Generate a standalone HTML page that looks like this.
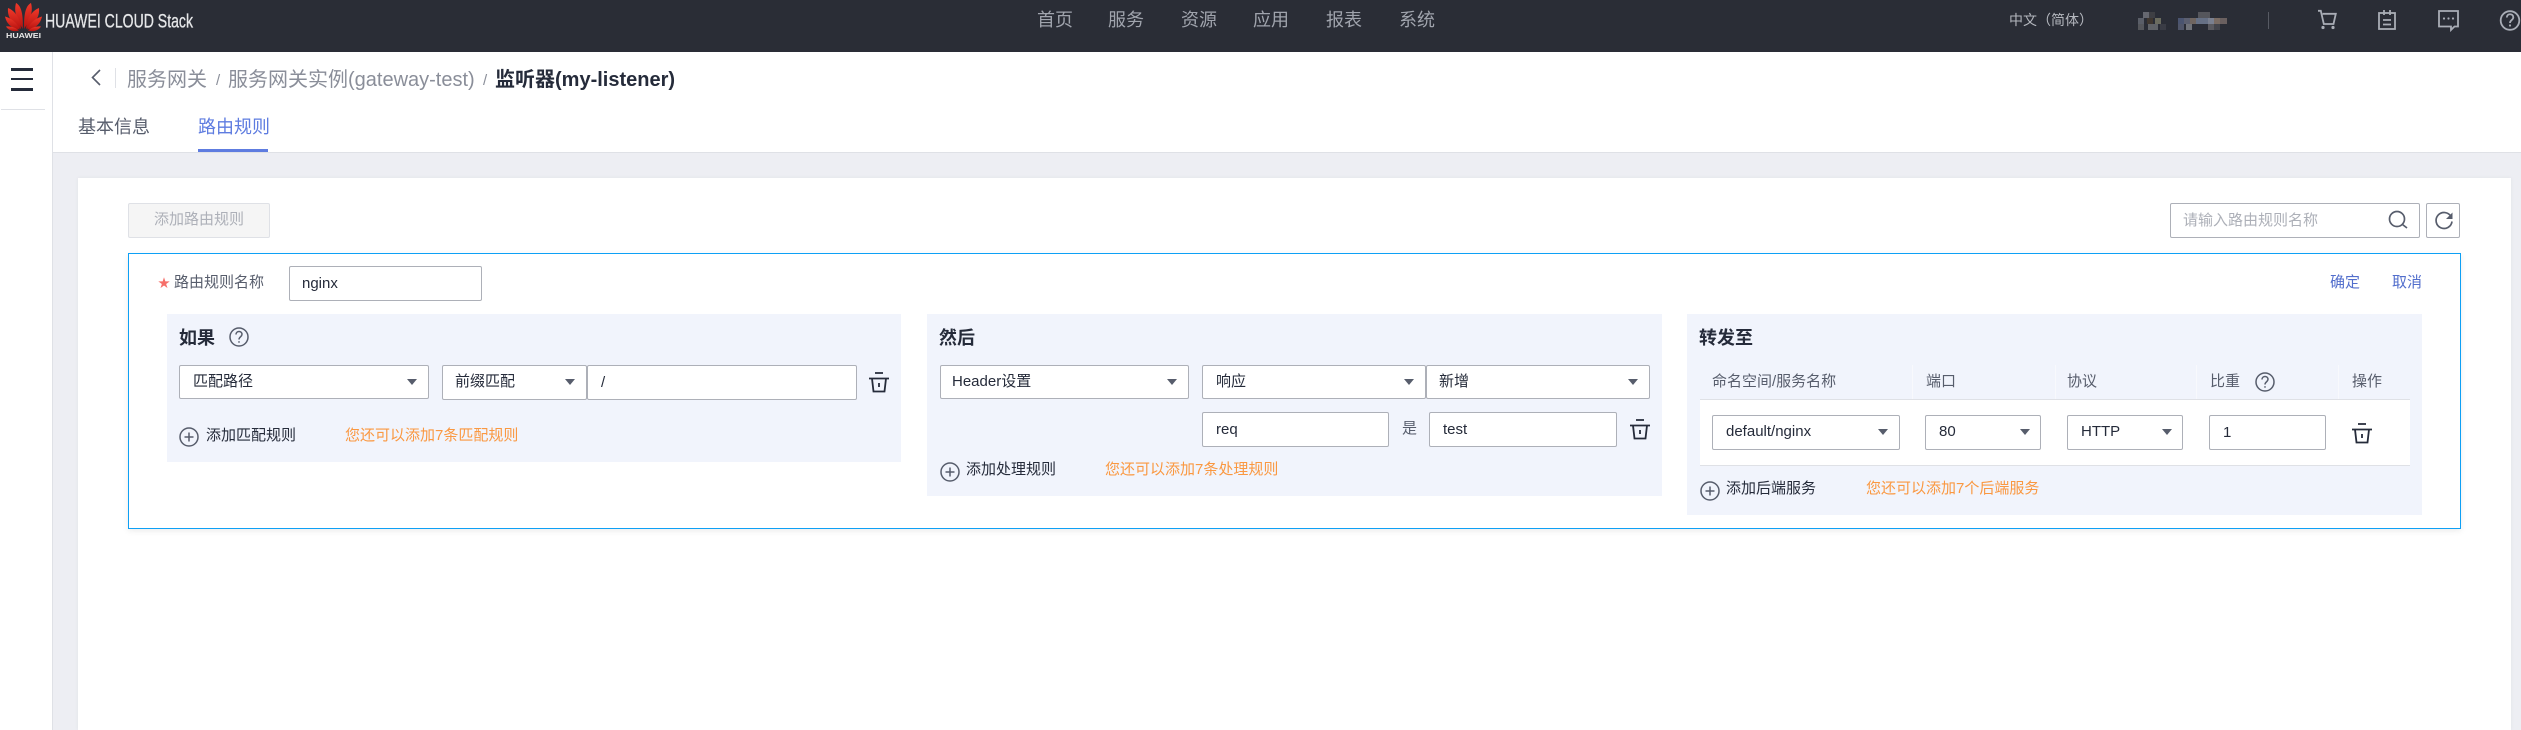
<!DOCTYPE html>
<html lang="zh-CN">
<head>
<meta charset="utf-8">
<title>监听器</title>
<style>
html,body{margin:0;padding:0;width:2521px;height:730px;overflow:hidden;background:#fff}
body{position:relative;font-family:"Liberation Sans","Noto Sans CJK SC",sans-serif;font-size:15px;color:#252b3a}
div,span,svg{position:absolute}
.t{white-space:nowrap;line-height:20px;height:20px}
.b{box-sizing:border-box;background:#fff;border:1px solid #adb0b8;border-radius:2px}
.a{width:0;height:0;border-left:5px solid transparent;border-right:5px solid transparent;border-top:6px solid #575d6c}
.o{color:#fa9841}
.l{color:#575d6c}
.h{font-size:18px;font-weight:700}
.n{color:#a0a4ad;font-size:18px;top:10px}
.p{background:#f1f4fc}
.d{background:#f8f9fd;width:1px;top:365px;height:34px}
</style>
</head>
<body>
<!-- top bar -->
<div style="left:0;top:0;width:2521px;height:52px;background:#2a2d36"></div>
<svg style="left:0;top:0" width="200" height="52" viewBox="0 0 200 52">
<defs><linearGradient id="r" x1="0" y1="0" x2="0" y2="1"><stop offset="0" stop-color="#f0392a"/><stop offset="1" stop-color="#b5120f"/></linearGradient></defs>
<g fill="url(#r)">
<path d="M22.800 29 C19 22 13 14 16 3 C20 5 23.500 11 22.800 29Z"/>
<path d="M24.200 29 C28 22 34 14 31 3 C27 5 23.500 11 24.200 29Z"/>
<path d="M21 29 C14 24 7 19 8 8 C14 10 20.500 18 21 29Z"/>
<path d="M26 29 C33 24 40 19 39 8 C33 10 26.500 18 26 29Z"/>
<path d="M20 29.500 C13 28.500 7 25.500 5 16.500 C11 18 17.500 23 20 29.500Z"/>
<path d="M27 29.500 C34 28.500 40 25.500 42 16.500 C36 18 29.500 23 27 29.500Z"/>
<path d="M19 30.500 C14 32 9 31 6 26.500 C11 26 15.500 27.500 19 30.500Z"/>
<path d="M28 30.500 C33 32 38 31 41 26.500 C36 26 31.500 27.500 28 30.500Z"/>
</g>
<text x="6" y="38" font-family="Liberation Sans" font-size="7" font-weight="700" fill="#e8e8e8" textLength="35" lengthAdjust="spacingAndGlyphs">HUAWEI</text>
<text x="45" y="27.500" font-family="Liberation Sans" font-size="19" fill="#e6e7e9" stroke="#e6e7e9" stroke-width=".3" textLength="148" lengthAdjust="spacingAndGlyphs">HUAWEI CLOUD Stack</text>
</svg>
<span class="t n" style="left:1037px">首页</span>
<span class="t n" style="left:1108px">服务</span>
<span class="t n" style="left:1181px">资源</span>
<span class="t n" style="left:1253px">应用</span>
<span class="t n" style="left:1326px">报表</span>
<span class="t n" style="left:1399px">系统</span>
<span class="t" style="left:2009px;top:10px;color:#b4b7be;font-size:14px">中文（简体）</span>
<svg style="left:2130px;top:0" width="391" height="52" viewBox="2130 0 391 52">
<g>
<rect x="2143" y="12" width="6" height="6" fill="#666870"/><rect x="2149" y="12" width="6" height="6" fill="#3e3f44"/><rect x="2198" y="12" width="12" height="6" fill="#55565c"/>
<rect x="2138" y="18" width="6" height="6" fill="#5a5e68"/><rect x="2147" y="18" width="6" height="6" fill="#3f3730"/><rect x="2155" y="18" width="6" height="6" fill="#6b6c5f"/><rect x="2178" y="18" width="6" height="6" fill="#4a5470"/><rect x="2184" y="18" width="6" height="6" fill="#5b5f70"/><rect x="2190" y="18" width="6" height="6" fill="#6f6560"/><rect x="2196" y="18" width="12" height="6" fill="#667085"/><rect x="2208" y="18" width="6" height="6" fill="#7a8090"/><rect x="2214" y="18" width="6" height="6" fill="#7a6c64"/><rect x="2220" y="18" width="7" height="6" fill="#6a6060"/>
<rect x="2138" y="24" width="6" height="6" fill="#55575c"/><rect x="2148" y="24" width="10" height="6" fill="#606368"/><rect x="2160" y="24" width="6" height="6" fill="#3a3c45"/><rect x="2178" y="24" width="6" height="6" fill="#50566a"/><rect x="2186" y="24" width="6" height="6" fill="#70737a"/><rect x="2208" y="24" width="6" height="6" fill="#5a5a60"/><rect x="2214" y="24" width="6" height="6" fill="#44454c"/>
</g>
<rect x="2268" y="12" width="1" height="17" fill="#575a63"/>
<g fill="none" stroke="#a9adb6" stroke-width="1.800">
<path d="M2318 10.800h2.800l3 13.200h9.700l2.300-10.200h-13.200"/>
<rect x="2379" y="13" width="16" height="16"/>
<path d="M2384 10v5M2390 10v5M2383 20h8M2383 24.500h8"/>
<path d="M2439 11h19v15.500h-3.500l-3.500 3.500v-3.500h-12z"/>
<circle cx="2510" cy="20.500" r="9.300"/>
<path d="M2506.800 17.500c0-4.300 6.500-4.300 6.500-.2 0 2.800-3.300 2.800-3.300 5.700"/>
</g>
<g fill="#a9adb6"><circle cx="2323" cy="27.500" r="1.600"/><circle cx="2333" cy="27.500" r="1.600"/><circle cx="2444" cy="18.500" r="1.100"/><circle cx="2448.500" cy="18.500" r="1.100"/><circle cx="2453" cy="18.500" r="1.100"/><circle cx="2510" cy="25.500" r="1.100"/></g>
</svg>

<!-- sidebar & header -->
<div style="left:52px;top:52px;width:1px;height:678px;background:#dfe1e6"></div>
<div style="left:11px;top:68px;width:22px;height:3px;background:#252b3a"></div>
<div style="left:11px;top:78px;width:22px;height:2px;background:#252b3a"></div>
<div style="left:11px;top:88px;width:22px;height:3px;background:#252b3a"></div>
<div style="left:1px;top:109px;width:44px;height:1px;background:#dfe1e6"></div>
<div style="left:53px;top:152px;width:2468px;height:578px;background:#edeef3"></div>
<div style="left:53px;top:152px;width:2468px;height:1px;background:#dfe1e6"></div>
<svg style="left:88px;top:66px" width="16" height="22" viewBox="0 0 16 22"><path d="M12 4L4.500 11.500l7.500 7.500" fill="none" stroke="#575d6c" stroke-width="1.600"/></svg>
<div style="left:115px;top:68px;width:1px;height:20px;background:#dfe1e6"></div>
<span class="t" style="left:127px;top:70px;font-size:20px;color:#8a8e99">服务网关</span>
<span class="t" style="left:216px;top:71px;font-size:15px;color:#8a8e99">/</span>
<span class="t" style="left:228px;top:70px;font-size:20px;color:#8a8e99">服务网关实例(gateway-test)</span>
<span class="t" style="left:483px;top:71px;font-size:15px;color:#8a8e99">/</span>
<span class="t" style="left:495px;top:70px;font-size:20px;font-weight:700;color:#252b3a">监听器(my-listener)</span>
<span class="t" style="left:78px;top:117px;font-size:18px;color:#575d6c">基本信息</span>
<span class="t" style="left:198px;top:117px;font-size:18px;color:#5e7ce0">路由规则</span>
<div style="left:198px;top:149px;width:70px;height:3px;background:#5e7ce0"></div>

<!-- card -->
<div style="left:78px;top:178px;width:2433px;height:552px;background:#fff;box-shadow:0 0 4px rgba(0,0,0,.05)"></div>
<div class="b" style="left:128px;top:203px;width:142px;height:35px;background:#f5f5f5;border-color:#dfe1e6"></div>
<span class="t" style="left:154px;top:210px;color:#adb0b8">添加路由规则</span>
<div class="b" style="left:2170px;top:203px;width:250px;height:35px"></div>
<span class="t" style="left:2183px;top:211px;color:#adb0b8">请输入路由规则名称</span>
<div class="b" style="left:2426px;top:203px;width:34px;height:35px"></div>
<svg style="left:2380px;top:200px" width="80" height="40" viewBox="2380 200 80 40" fill="none" stroke="#575d6c" stroke-width="1.700">
<circle cx="2397" cy="219" r="7.500"/><path d="M2402.500 224.500l4.500 3.500"/>
<path d="M2451 216.500a8 8 0 1 0 1 5"/>
<path d="M2452.500 212.500v6.500h-6.500z" fill="#575d6c" stroke="none"/>
</svg>

<!-- editor box -->
<div style="left:128px;top:253px;width:2333px;height:276px;box-sizing:border-box;border:1px solid #0ea0f5;background:#fff;box-shadow:0 2px 6px rgba(0,0,0,.08)"></div>
<span class="t" style="left:158px;top:273px;color:#f66f6a;font-size:12px">★</span>
<span class="t" style="left:174px;top:273px;color:#575d6c">路由规则名称</span>
<div class="b" style="left:289px;top:266px;width:193px;height:35px"></div>
<span class="t" style="left:302px;top:274px">nginx</span>
<span class="t" style="left:2330px;top:273px;color:#526ecc">确定</span>
<span class="t" style="left:2392px;top:273px;color:#526ecc">取消</span>

<!-- panel 1 -->
<div class="p" style="left:167px;top:314px;width:734px;height:148px"></div>
<span class="t h" style="left:179px;top:328px">如果</span>
<div class="b" style="left:179px;top:365px;width:250px;height:34px"></div>
<span class="t" style="left:193px;top:372px">匹配路径</span><div class="a" style="left:407px;top:379px"></div>
<div class="b" style="left:442px;top:365px;width:145px;height:35px"></div>
<span class="t" style="left:455px;top:372px">前缀匹配</span><div class="a" style="left:565px;top:379px"></div>
<div class="b" style="left:587px;top:365px;width:270px;height:35px"></div>
<span class="t" style="left:601px;top:373px">/</span>
<span class="t" style="left:206px;top:426px">添加匹配规则</span>
<span class="t o" style="left:345px;top:426px">您还可以添加7条匹配规则</span>

<!-- panel 2 -->
<div class="p" style="left:927px;top:314px;width:735px;height:182px"></div>
<span class="t h" style="left:939px;top:328px">然后</span>
<div class="b" style="left:940px;top:365px;width:249px;height:34px"></div>
<span class="t" style="left:952px;top:372px">Header设置</span><div class="a" style="left:1167px;top:379px"></div>
<div class="b" style="left:1202px;top:365px;width:224px;height:34px"></div>
<span class="t" style="left:1216px;top:372px">响应</span><div class="a" style="left:1404px;top:379px"></div>
<div class="b" style="left:1426px;top:365px;width:224px;height:34px"></div>
<span class="t" style="left:1439px;top:372px">新增</span><div class="a" style="left:1628px;top:379px"></div>
<div class="b" style="left:1202px;top:412px;width:187px;height:35px"></div>
<span class="t" style="left:1216px;top:420px">req</span>
<span class="t l" style="left:1402px;top:419px">是</span>
<div class="b" style="left:1429px;top:412px;width:188px;height:35px"></div>
<span class="t" style="left:1443px;top:420px">test</span>
<span class="t" style="left:966px;top:460px">添加处理规则</span>
<span class="t o" style="left:1105px;top:460px">您还可以添加7条处理规则</span>

<!-- panel 3 -->
<div class="p" style="left:1687px;top:314px;width:735px;height:201px"></div>
<span class="t h" style="left:1699px;top:328px">转发至</span>
<div class="d" style="left:1912px"></div><div class="d" style="left:2055px"></div><div class="d" style="left:2196px"></div><div class="d" style="left:2338px"></div>
<span class="t l" style="left:1712px;top:372px">命名空间/服务名称</span>
<span class="t l" style="left:1926px;top:372px">端口</span>
<span class="t l" style="left:2067px;top:372px">协议</span>
<span class="t l" style="left:2210px;top:372px">比重</span>
<span class="t l" style="left:2352px;top:372px">操作</span>
<div style="left:1700px;top:399px;width:710px;height:67px;box-sizing:border-box;background:#fff;border-top:1px solid #dfe1e6;border-bottom:1px solid #dfe1e6"></div>
<div class="b" style="left:1712px;top:415px;width:188px;height:35px"></div>
<span class="t" style="left:1726px;top:422px">default/nginx</span><div class="a" style="left:1878px;top:429px"></div>
<div class="b" style="left:1925px;top:415px;width:116px;height:35px"></div>
<span class="t" style="left:1939px;top:422px">80</span><div class="a" style="left:2020px;top:429px"></div>
<div class="b" style="left:2067px;top:415px;width:116px;height:35px"></div>
<span class="t" style="left:2081px;top:422px">HTTP</span><div class="a" style="left:2162px;top:429px"></div>
<div class="b" style="left:2209px;top:415px;width:117px;height:35px"></div>
<span class="t" style="left:2223px;top:423px">1</span>
<span class="t" style="left:1726px;top:479px">添加后端服务</span>
<span class="t o" style="left:1866px;top:479px">您还可以添加7个后端服务</span>

<!-- shared icons -->
<svg style="left:0;top:0" width="2521" height="730" viewBox="0 0 2521 730">
<defs>
<g id="tr" fill="none" stroke="#252b3a" stroke-width="1.800"><path d="M6 1h8M0 6.500h20M3 6.500l1.500 13h11l1.500-13"/><path d="M10 11v4"/></g>
<g id="hp" fill="none" stroke="#575d6c" stroke-width="1.500"><circle cx="10" cy="10" r="9"/><path d="M7 7.500c0-4 6-4 6-.2 0 2.500-3 2.500-3 5.200"/><path d="M10 14.200v1.500"/></g>
<g id="ad" fill="none" stroke="#575d6c" stroke-width="1.500"><circle cx="10" cy="10" r="9"/><path d="M10 5.500v9M5.500 10h9"/></g>
</defs>
<use href="#tr" x="869" y="372"/><use href="#tr" x="1630" y="419"/><use href="#tr" x="2352" y="423"/>
<use href="#hp" x="229" y="327"/><use href="#hp" x="2255" y="372"/>
<use href="#ad" x="179" y="427"/><use href="#ad" x="940" y="462"/><use href="#ad" x="1700" y="481"/>
</svg>
</body>
</html>
